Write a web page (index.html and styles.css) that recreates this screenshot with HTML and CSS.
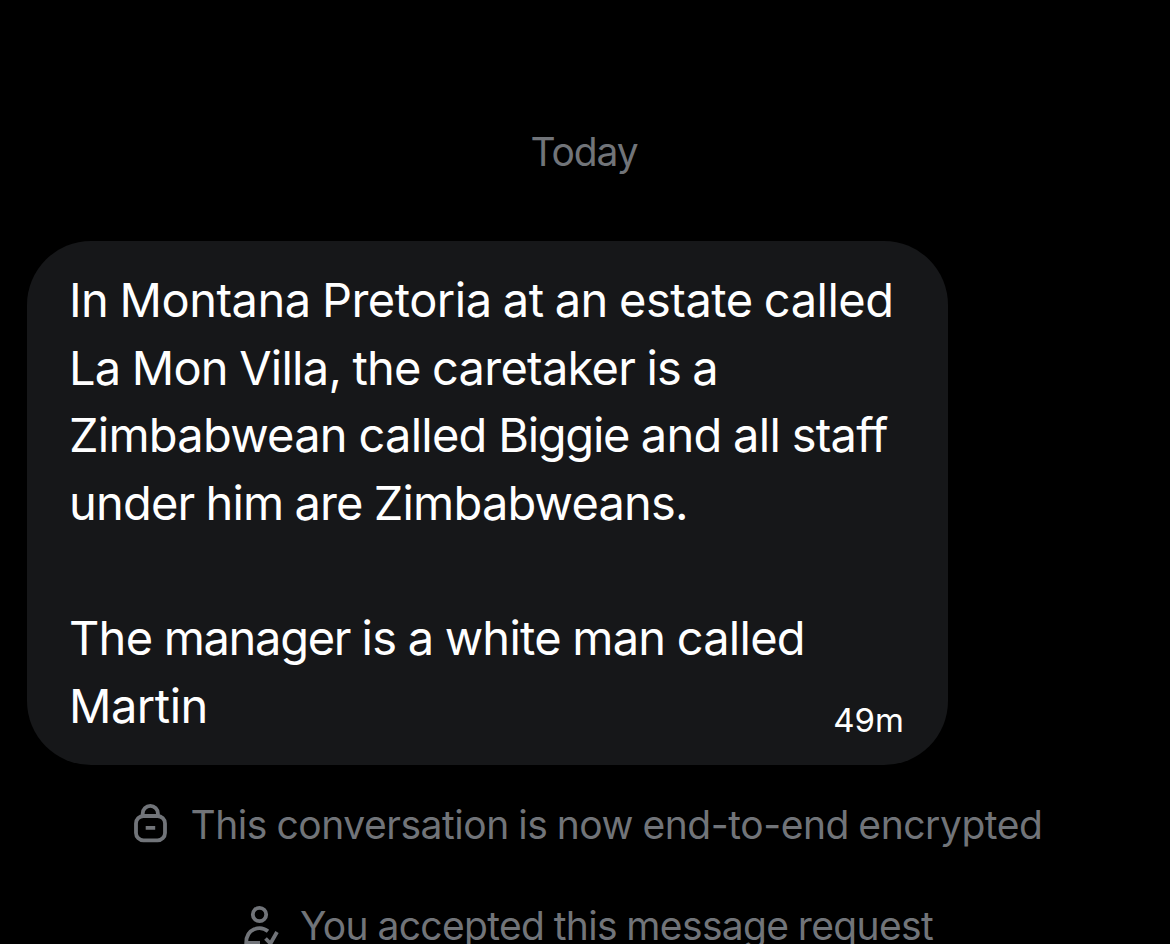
FILE: index.html
```html
<!DOCTYPE html>
<html lang="en">
<head>
<meta charset="utf-8">
<title>Conversation</title>
<link rel="stylesheet" href="styles.css">
</head>
<body>
<main class="chat">
  <div class="day">Today</div>
  <article class="bubble">
    <p class="message">
      <span class="line l1">In Montana Pretoria at an estate called</span>
      <span class="line l2">La Mon Villa, the caretaker is a</span>
      <span class="line l3">Zimbabwean called <span class="tight">Biggie</span> and all staff</span>
      <span class="line l4">under him are Zimbabweans.</span>
    </p>
    <p class="message">
      <span class="line l5">The <span class="tight">manager</span> is a white man called</span>
      <span class="line l6">Martin</span>
    </p>
    <time class="time">49m</time>
  </article>
  <div class="notice encrypted">
    <svg class="icon" width="36" height="42" viewBox="0 0 36 42" fill="none" stroke="currentColor" stroke-width="3.800">
      <rect x="4" y="12" width="29" height="24.400" rx="7.500"/>
      <path d="M10.700 12V9.500a7.600 7.600 0 0 1 15.200 0V12M13.700 23.800h9.500"/>
    </svg>
    <span class="label">This conversation is now end-to-end encrypted</span>
  </div>
  <div class="notice accepted">
    <svg class="icon" width="36" height="42" viewBox="0 0 36 42" fill="none" stroke="currentColor" stroke-width="3.800">
      <circle cx="16.500" cy="9.500" r="6.700"/>
      <path d="M25 26.300C17 20 3.200 23.500 3.200 38H17M22.500 33.500l5 5 6.500-11.500"/>
    </svg>
    <span class="label">You accepted this message request</span>
  </div>
</main>
</body>
</html>
```
FILE: styles.css
```css
* { box-sizing: border-box; }
body { margin: 0; background: #000; font-family: Inter, "Liberation Sans", sans-serif; }
.chat { height: 944px; padding: 126px 0 0 27px; overflow: hidden; display: flex; flex-direction: column; }
.day { flex: none; margin-left: -27px; padding-right: 2px; height: 52px; line-height: 51px; font-size: 39px; letter-spacing: -1.100px; color: #717479; text-align: center; }
.bubble { flex: none; position: relative; margin-top: 63px; width: 921px; height: 524px; padding: 25px 42px; border-radius: 64px; background: #161719; color: #fff; }
.message { margin: 0 0 67.600px; font-size: 47px; line-height: 67.600px; }
.line { display: block; width: max-content; white-space: nowrap; }
.l1 { letter-spacing: -.5px; word-spacing: -1.500px; }
.l2 { letter-spacing: -.75px; word-spacing: -1.200px; }
.l3 { letter-spacing: -.75px; word-spacing: -.800px; }
.l4 { letter-spacing: -.8px; word-spacing: -1.400px; }
.l5 { letter-spacing: -.75px; word-spacing: -1.100px; }
.l6 { letter-spacing: -.5px; }
.l3 .tight, .l5 .tight { letter-spacing: -1.300px; }
.time { position: absolute; right: 44px; bottom: 25px; font-size: 33px; line-height: 40px; }
.notice { flex: none; display: flex; align-items: center; height: 52px; font-size: 39px; line-height: 52px; color: #717479; white-space: nowrap; }
.icon { flex: none; }
.encrypted { margin: 34px 0 0 105px; gap: 22.500px; }
.accepted { margin: 49px 0 0 216px; gap: 21px; }
.encrypted .label { letter-spacing: -.45px; word-spacing: -1.100px; }
.accepted .label { letter-spacing: -.65px; word-spacing: -.900px; }
```
